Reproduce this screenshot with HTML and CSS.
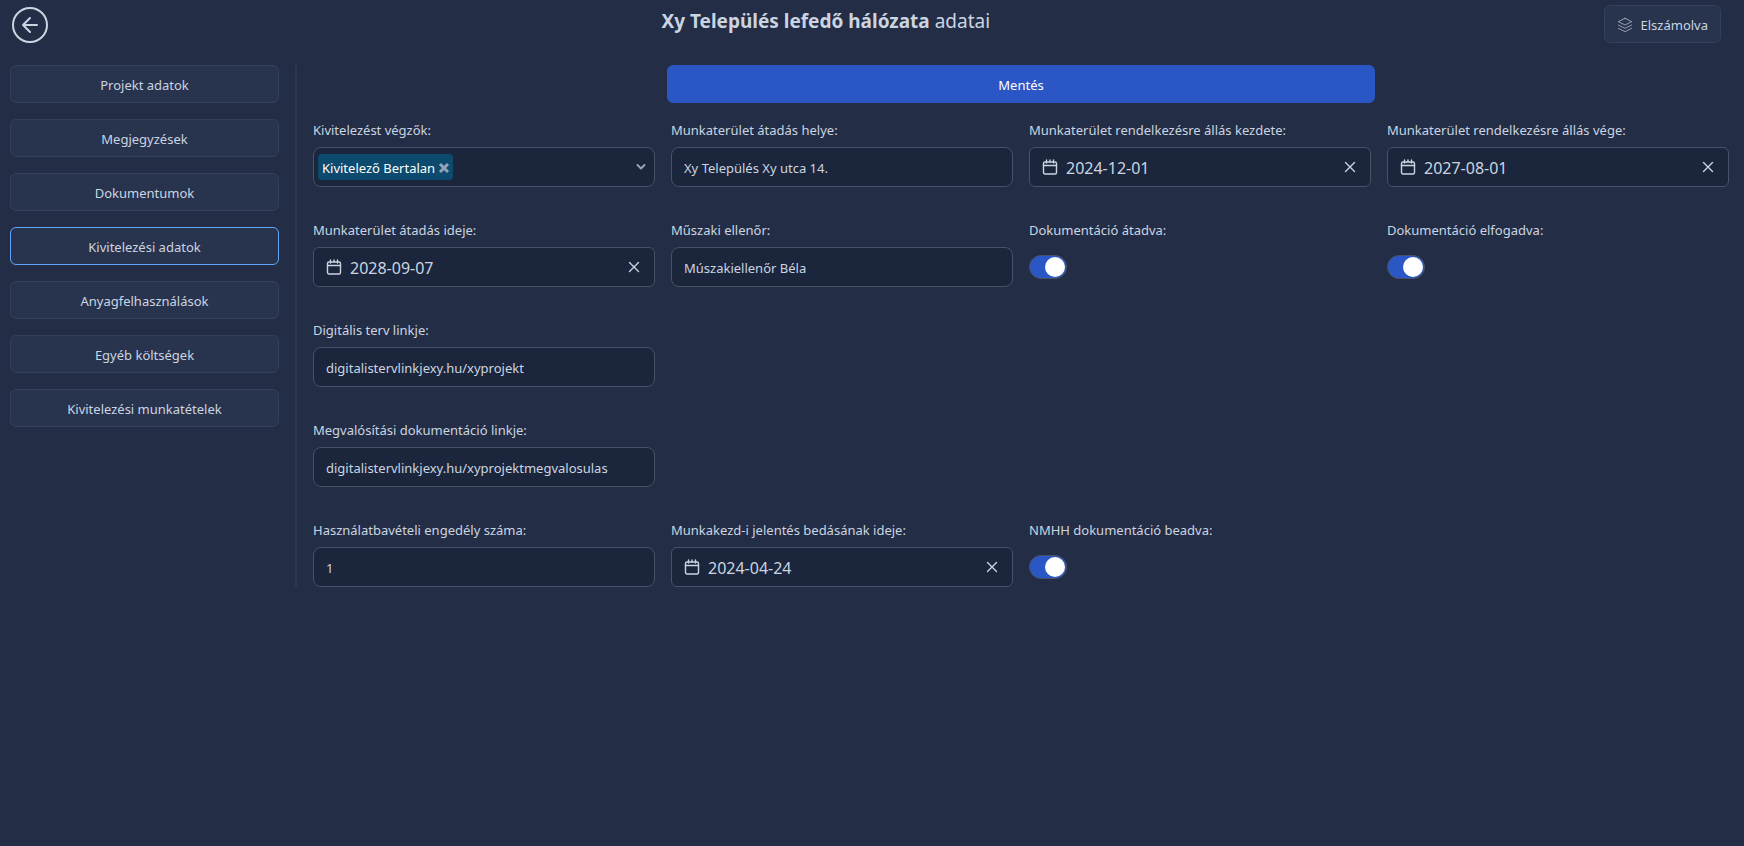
FILE: index.html
```html
<!DOCTYPE html>
<html lang="hu">
<head>
<meta charset="utf-8">
<meta name="viewport" content="width=device-width, initial-scale=1">
<title>Xy Település lefedő hálózata adatai</title>
<link rel="stylesheet" href="styles.css">
</head>
<body>
<svg class="sprite" aria-hidden="true">
  <symbol id="calendar" viewBox="0 0 16 16">
    <rect x="1.500" y="3" width="13" height="12" rx="1.500"/>
    <path d="M1.500 6.500h13M4.500 1v3M8 1v2M11.500 1v3"/>
  </symbol>
  <symbol id="clear" viewBox="0 0 12 12">
    <path d="M1.500 1.500l9 9M10.500 1.500l-9 9"/>
  </symbol>
</svg>

<header class="header">
  <button class="back" type="button" aria-label="Vissza">
    <svg class="back-icon" viewBox="0 0 36 36" aria-hidden="true">
      <circle cx="18" cy="18" r="17"/>
      <path d="M25 18H11M18 11l-7 7 7 7"/>
    </svg>
  </button>
  <h1 class="title"><strong>Xy Település lefedő hálózata</strong> adatai</h1>
  <button class="btn btn-status" type="button">
    <svg class="layers-icon" viewBox="0 0 24 24" aria-hidden="true">
      <path d="M12 2L2 7l10 5 10-5-10-5zM2 17l10 5 10-5M2 12l10 5 10-5"/>
    </svg>
    Elszámolva
  </button>
</header>

<div class="layout">
  <nav class="sidebar">
    <button class="btn" type="button">Projekt adatok</button>
    <button class="btn" type="button">Megjegyzések</button>
    <button class="btn" type="button">Dokumentumok</button>
    <button class="btn btn-active" type="button" aria-current="page">Kivitelezési adatok</button>
    <button class="btn" type="button">Anyagfelhasználások</button>
    <button class="btn" type="button">Egyéb költségek</button>
    <button class="btn" type="button">Kivitelezési munkatételek</button>
  </nav>

  <form class="form">
    <button class="btn btn-primary" type="button">Mentés</button>

    <div class="row">
      <div class="field">
        <label class="label" for="contractors">Kivitelezést végzők:</label>
        <div class="control multiselect">
          <span class="tag">Kivitelező Bertalan
            <button class="icon-btn" type="button" aria-label="Kivitelező Bertalan eltávolítása">
              <svg class="tag-icon" viewBox="0 0 12 12" aria-hidden="true"><path d="M2 2l8 8M10 2l-8 8"/></svg>
            </button>
          </span>
          <input class="bare" id="contractors" type="text" role="combobox" aria-expanded="false">
          <button class="icon-btn" type="button" aria-label="Lista megnyitása">
            <svg class="chevron-icon" viewBox="0 0 10 8" aria-hidden="true"><path d="M1.500 2L5 5.500 8.500 2"/></svg>
          </button>
        </div>
      </div>
      <div class="field">
        <label class="label" for="place">Munkaterület átadás helye:</label>
        <input class="control input" id="place" type="text" value="Xy Település Xy utca 14.">
      </div>
      <div class="field">
        <label class="label" for="start">Munkaterület rendelkezésre állás kezdete:</label>
        <div class="control date">
          <svg class="calendar-icon" aria-hidden="true"><use href="#calendar"/></svg>
          <input class="bare" id="start" type="text" value="2024-12-01">
          <button class="icon-btn" type="button" aria-label="Törlés"><svg class="clear-icon" aria-hidden="true"><use href="#clear"/></svg></button>
        </div>
      </div>
      <div class="field">
        <label class="label" for="end">Munkaterület rendelkezésre állás vége:</label>
        <div class="control date">
          <svg class="calendar-icon" aria-hidden="true"><use href="#calendar"/></svg>
          <input class="bare" id="end" type="text" value="2027-08-01">
          <button class="icon-btn" type="button" aria-label="Törlés"><svg class="clear-icon" aria-hidden="true"><use href="#clear"/></svg></button>
        </div>
      </div>
    </div>

    <div class="row">
      <div class="field">
        <label class="label" for="handover">Munkaterület átadás ideje:</label>
        <div class="control date">
          <svg class="calendar-icon" aria-hidden="true"><use href="#calendar"/></svg>
          <input class="bare" id="handover" type="text" value="2028-09-07">
          <button class="icon-btn" type="button" aria-label="Törlés"><svg class="clear-icon" aria-hidden="true"><use href="#clear"/></svg></button>
        </div>
      </div>
      <div class="field">
        <label class="label" for="inspector">Műszaki ellenőr:</label>
        <input class="control input" id="inspector" type="text" value="Múszakiellenőr Béla">
      </div>
      <div class="field">
        <label class="label" for="delivered">Dokumentáció átadva:</label>
        <input class="switch" id="delivered" type="checkbox" role="switch" checked>
      </div>
      <div class="field">
        <label class="label" for="accepted">Dokumentáció elfogadva:</label>
        <input class="switch" id="accepted" type="checkbox" role="switch" checked>
      </div>
    </div>

    <div class="row">
      <div class="field">
        <label class="label" for="plan">Digitális terv linkje:</label>
        <input class="control input" id="plan" type="text" value="digitalistervlinkjexy.hu/xyprojekt">
      </div>
    </div>

    <div class="row">
      <div class="field">
        <label class="label" for="realization">Megvalósítási dokumentáció linkje:</label>
        <input class="control input" id="realization" type="text" value="digitalistervlinkjexy.hu/xyprojektmegvalosulas">
      </div>
    </div>

    <div class="row">
      <div class="field">
        <label class="label" for="permit">Használatbavételi engedély száma:</label>
        <input class="control input" id="permit" type="text" value="1">
      </div>
      <div class="field">
        <label class="label" for="report">Munkakezd-i jelentés bedásának ideje:</label>
        <div class="control date">
          <svg class="calendar-icon" aria-hidden="true"><use href="#calendar"/></svg>
          <input class="bare" id="report" type="text" value="2024-04-24">
          <button class="icon-btn" type="button" aria-label="Törlés"><svg class="clear-icon" aria-hidden="true"><use href="#clear"/></svg></button>
        </div>
      </div>
      <div class="field">
        <label class="label" for="nmhh">NMHH dokumentáció beadva:</label>
        <input class="switch" id="nmhh" type="checkbox" role="switch" checked>
      </div>
    </div>
  </form>
</div>
</body>
</html>
```
FILE: styles.css
```css
*,
*::before,
*::after {
  box-sizing: border-box;
}

body {
  margin: 0;
  min-height: 100vh;
  background: #232d45;
  color: #cbd5e1;
  font-family: "Noto Sans", "Open Sans", sans-serif;
  font-size: 13px;
  line-height: 20px;
}

button,
input {
  margin: 0;
  color: inherit;
  font: inherit;
}

button {
  cursor: pointer;
}

svg {
  display: block;
  fill: none;
  stroke: currentColor;
  stroke-linecap: round;
  stroke-linejoin: round;
}

.sprite {
  position: absolute;
  width: 0;
  height: 0;
}

.header {
  display: flex;
  justify-content: space-between;
  align-items: flex-start;
  padding: 5px 23px 22px 12px;
}

.back {
  padding: 0;
  margin-top: 2px;
  border: 0;
  background: none;
}

.back-icon {
  width: 36px;
  height: 36px;
  stroke-width: 2;
}

.title {
  margin: 2px 0 0;
  font-size: 19px;
  font-weight: 400;
  line-height: 28px;
}

.title strong {
  font-weight: 700;
}

.btn {
  display: flex;
  align-items: center;
  justify-content: center;
  padding: 9px 12px 7px;
  border: 1px solid #32405d;
  border-radius: 6px;
  background: #28334e;
}

.btn-active {
  border-color: #60a5fa;
}

.btn-status {
  gap: 8px;
}

.btn-primary {
  align-self: center;
  width: 50%;
  margin-bottom: 16px;
  border-color: #2b56c6;
  background: #2b56c6;
  color: #fff;
}

.layers-icon {
  width: 16px;
  height: 16px;
  stroke-width: 1;
}

.layout {
  display: flex;
  align-items: stretch;
  gap: 16px;
  padding: 0 15px 0 10px;
}

.sidebar {
  display: flex;
  flex: 0 0 269px;
  flex-direction: column;
  gap: 16px;
}

.form {
  display: flex;
  flex: 1;
  flex-direction: column;
  padding-left: 16px;
  border-left: 2px solid #2b3753;
}

.row {
  display: grid;
  grid-template-columns: repeat(4, minmax(0, 1fr));
  gap: 16px;
}

.row + .row {
  margin-top: 32px;
}

.field {
  display: flex;
  flex-direction: column;
  align-items: flex-start;
  gap: 6px;
}

.label {
  line-height: 22px;
}

.control {
  width: 100%;
  height: 40px;
  border: 1px solid #475264;
  border-radius: 8px;
  background: #1b253b;
}

.input {
  padding: 2px 12px 0;
}

.bare {
  flex: 1;
  min-width: 0;
  padding: 2px 0 0;
  border: 0;
  outline: 0;
  background: none;
}

.icon-btn {
  padding: 0;
  border: 0;
  background: none;
}

.multiselect {
  display: flex;
  align-items: center;
  padding: 0 8px 0 4px;
}

.tag {
  display: flex;
  align-items: center;
  gap: 3px;
  padding: 4px 3px 2px 4px;
  border-radius: 4px;
  background: #0c4a6e;
  color: #fff;
}

.tag-icon {
  width: 12px;
  height: 12px;
  color: #94a3b8;
  stroke-linecap: butt;
  stroke-width: 3;
}

.chevron-icon {
  width: 10px;
  height: 8px;
  color: #94a3b8;
  stroke-width: 2;
}

.date {
  display: flex;
  align-items: center;
  gap: 8px;
  padding: 0 14px 0 12px;
  border-radius: 6px;
  font-size: 16px;
}

.calendar-icon {
  width: 16px;
  height: 16px;
  stroke-width: 1.4;
}

.clear-icon {
  width: 12px;
  height: 12px;
  stroke-width: 1.4;
}

.switch {
  appearance: none;
  display: flex;
  align-items: center;
  justify-content: flex-end;
  width: 38px;
  height: 24px;
  margin-top: 8px;
  padding: 0 1px;
  border: 1px solid #475264;
  border-radius: 12px;
  background: #2b56c6;
}

.switch::before {
  content: "";
  width: 20px;
  height: 20px;
  border-radius: 50%;
  background: #fff;
}

.switch:not(:checked) {
  justify-content: flex-start;
  background: #1b253b;
}
```
